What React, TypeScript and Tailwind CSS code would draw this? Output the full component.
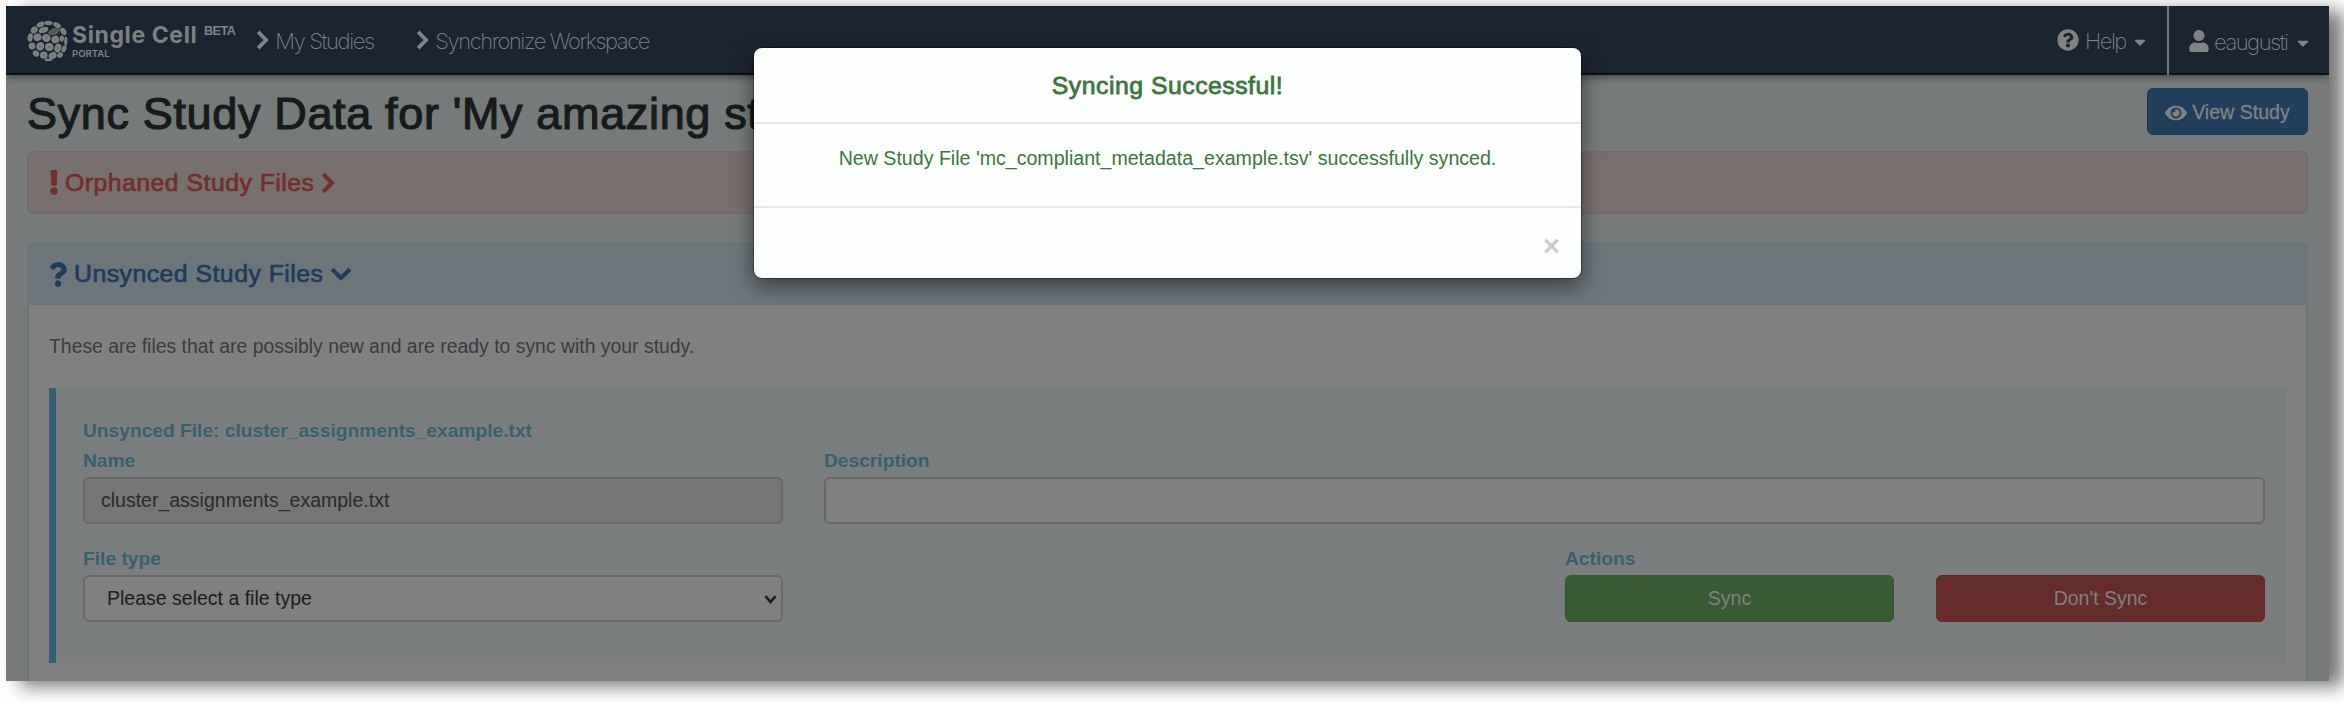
import React from "react";
import { FaQuestionCircle, FaUser, FaEye, FaExclamation, FaQuestion, FaCaretDown } from "react-icons/fa";

const cells: [number, number, number, number, number][] = [
  [13.5, 4.5, 4.2, 2.6, -25],
  [21.5, 3, 4, 2.3, 5],
  [30, 5.2, 4.2, 2.4, 30],
  [7.2, 10, 3.7, 3.2, -50],
  [16.5, 10, 5, 3, -20],
  [36.4, 11.5, 2.7, 4, -30],
  [3.2, 17.5, 2.5, 4.2, 10],
  [10.5, 17.2, 4, 3.7, -30],
  [19.3, 18, 4.3, 4, 20],
  [28.3, 19.5, 4, 3.8, -20],
  [34.8, 18.6, 2.1, 3.2, 0],
  [38.8, 21, 1.6, 4.6, 0],
  [5, 26, 3.3, 3.4, -20],
  [13.2, 26.3, 3.9, 4.4, 20],
  [22.3, 27, 4.2, 4, -10],
  [30.8, 28, 3.3, 4.4, 20],
  [37, 28.8, 2.3, 3.6, 20],
  [9, 33.6, 3.4, 2.9, 40],
  [16.8, 35.2, 3.7, 3.6, 0],
  [25.6, 35.6, 4, 3.4, -30],
  [33, 35, 3, 2.6, -40],
  [21.5, 39.7, 3.8, 1.3, 0],
];

function Logo() {
  return (
    <svg viewBox="0 0 41 41" className="h-[41px] w-[41px] shrink-0">
      <ellipse cx="27" cy="11.6" rx="6.2" ry="3.4" transform="rotate(-20 27 11.6)" fill="#54595c" />
      {cells.map(([x, y, rx, ry, r], i) => (
        <g key={i} transform={`translate(${x} ${y}) rotate(${r})`}>
          <ellipse rx={rx} ry={ry} fill="#7e8283" />
          <ellipse rx={rx * 0.35} ry={ry * 0.35} fill="#6e7375" />
        </g>
      ))}
    </svg>
  );
}

function ChevronRight({ className }: { className: string }) {
  return (
    <svg viewBox="0 0 13 21" className={`shrink-0 ${className}`}>
      <path d="M2 2 10.2 10.5 2 19" fill="none" stroke="currentColor" strokeWidth="4" />
    </svg>
  );
}

function ChevronDown({ className }: { className: string }) {
  return (
    <svg viewBox="0 0 21 13" className={`shrink-0 ${className}`}>
      <path d="M2 2 10.5 10.2 19 2" fill="none" stroke="currentColor" strokeWidth="3.8" />
    </svg>
  );
}

function NavText({ children, className }: { children: React.ReactNode; className: string }) {
  return (
    <span className={`whitespace-nowrap font-['Inter',sans-serif] text-[22px] font-extralight leading-[30px] text-[#7d8386] ${className}`}>
      {children}
    </span>
  );
}

function Navbar() {
  return (
    <nav className="relative z-10 flex h-[69px] shrink-0 items-stretch border-b-2 border-[#0d1117] bg-[#1b2431] text-[#7f8384] shadow-[0_2px_8px_rgba(0,0,0,0.45)]">
      <div className="flex items-start pl-[21px] pt-[14px]">
        <Logo />
        <div className="ml-1 flex w-[126px] flex-col pt-[4px]">
          <span className="h-[24px] whitespace-nowrap font-['Inter',sans-serif] text-[23px] font-bold leading-[23px] tracking-[0.6px] text-[#7c8081]">
            Single Cell
          </span>
          <span className="font-['Inter',sans-serif] text-[9.6px] font-semibold leading-[11px] tracking-[0px]">PORTAL</span>
        </div>
        <span className="ml-[6px] mt-[4px] text-[12.6px] font-bold leading-[14px] tracking-[-0.5px]">BETA</span>
      </div>
      <div className="ml-[21px] flex items-center">
        <ChevronRight className="mt-px h-[20px] w-[13px]" />
        <NavText className="ml-[6px] w-[98px] pt-[2px] tracking-[-1.4px]">My Studies</NavText>
        <ChevronRight className="ml-[43px] mt-px h-[20px] w-[13px]" />
        <NavText className="ml-[6px] pt-[2px] tracking-[-1.45px]">Synchronize Workspace</NavText>
      </div>
      <div className="ml-auto flex items-center pr-[20px]">
        <FaQuestionCircle className="h-[22px] w-[22px]" />
        <NavText className="ml-[6px] w-[41px] pt-[2px] tracking-[-1.5px]">Help</NavText>
        <FaCaretDown className="ml-[7px] mt-[4px] h-[18px] w-[14px]" />
      </div>
      <div className="-mb-[2px] flex items-center border-l-2 border-[#75797b] pl-[20px] pr-[19px]">
        <FaUser className="h-[22px] w-[20px]" />
        <NavText className="ml-[5px] w-[75px] pt-[2px] tracking-[-1.5px]">eaugusti</NavText>
        <FaCaretDown className="ml-[7px] mt-[4px] h-[18px] w-[14px]" />
      </div>
    </nav>
  );
}

function Label({ children }: { children: React.ReactNode }) {
  return (
    <div className="h-[31px] whitespace-nowrap pt-px text-[19.2px] font-bold leading-[28px] text-[#375f70]">{children}</div>
  );
}

function SyncForm() {
  return (
    <section className="mt-[20px] flex h-[275px] flex-col border-l-[7px] border-[#375f70] bg-[#797d7e] pl-[27px] pr-[21px] pt-[28px]">
      <Label>Unsynced File: cluster_assignments_example.txt</Label>
      <div className="-mt-px flex gap-[41px]">
        <div className="w-[700px]">
          <Label>Name</Label>
          <div className="flex h-[47px] items-center rounded-[6px] border-2 border-[#686868] bg-[#767677] pl-[16px] pt-px text-[19.5px] text-[#2a2a2b]">
            cluster_assignments_example.txt
          </div>
        </div>
        <div className="flex-1">
          <Label>Description</Label>
          <div className="h-[47px] rounded-[6px] border-2 border-[#686868] bg-[#808081]" />
        </div>
      </div>
      <div className="mt-[20px] flex">
        <div className="w-[700px]">
          <Label>File type</Label>
          <div className="flex h-[47px] items-center justify-between rounded-[6px] border-2 border-[#686868] bg-[#808081] pl-[22px] pr-[4px] pt-px text-[19.5px] text-[#1c1c1c]">
            Please select a file type
            <svg viewBox="0 0 12 9" className="h-[9px] w-[13px]">
              <path d="M1 1.2 6 7 11 1.2" fill="none" stroke="#1c1c1c" strokeWidth="2.6" />
            </svg>
          </div>
        </div>
        <div className="ml-auto w-[700px]">
          <Label>Actions</Label>
          <div className="flex gap-[42px] text-[19.5px] text-[#808080]">
            <button className="h-[47px] flex-1 rounded-[6px] border border-[#35562f] bg-[#395b33] pt-px">Sync</button>
            <button className="h-[47px] flex-1 rounded-[6px] border border-[#632725] bg-[#642d2b] pt-px">Don't Sync</button>
          </div>
        </div>
      </div>
    </section>
  );
}

function Modal() {
  return (
    <div className="absolute left-[748px] top-[42px] z-20 flex h-[230px] w-[827px] flex-col rounded-[8px] bg-[#fdfefe] text-[#3c763d] shadow-[0_0_0_1px_rgba(0,0,0,0.35),0_7px_21px_rgba(0,0,0,0.5)]">
      <h4 className="h-[76px] border-b-2 border-[#e5e8e8] pt-[23px] text-center text-[24.8px] font-normal leading-[29px] tracking-[0.5px] [-webkit-text-stroke:0.8px_#3c763d]">
        Syncing Successful!
      </h4>
      <p className="h-[84px] border-b-2 border-[#e5e8e8] pt-[20px] text-center text-[19.6px] leading-[28px]">
        New Study File 'mc_compliant_metadata_example.tsv' successfully synced.
      </p>
      <div className="flex justify-end pr-[21px] pt-[22px]">
        <span className="text-[29px] font-bold leading-[32px] text-[#cbcccc]">×</span>
      </div>
    </div>
  );
}

export default function App() {
  return (
    <div className="h-[702px] w-[2344px] overflow-hidden bg-white p-[6px] pr-[15px] font-['Liberation_Sans',Arial,sans-serif]">
      <div className="relative h-[675px] w-[2323px] bg-[#767a7a] shadow-[14px_5px_18px_rgba(0,0,0,0.55)]">
        <div className="flex h-full flex-col overflow-hidden">
          <Navbar />
          <main className="flex flex-col px-[21px] pt-[13px]">
            <div className="flex h-[63px] items-start justify-between">
              <h1 className="whitespace-nowrap pt-px text-[45px] font-normal leading-[50px] tracking-[0.65px] text-[#171b1c] [-webkit-text-stroke:1.2px_#171b1c]">
                Sync Study Data for 'My amazing study'
              </h1>
              <button className="flex h-[47px] w-[161px] items-center justify-center gap-[5px] rounded-[6px] border border-[#1c3955] bg-[#213e5c] pt-[2px] text-[19.6px] text-[#7f8384] [-webkit-text-stroke:0.3px_#7f8384]">
                <FaEye className="h-[22px] w-[22px]" />
                View Study
              </button>
            </div>
            <div className="flex h-[63px] items-center rounded-[6px] border-2 border-[#75696b] bg-[#78706e] pl-[19px] text-[24.8px] tracking-[0.48px] text-[#732f2c]">
              <FaExclamation className="h-[25px] w-[12px]" />
              <span className="ml-[5px] [-webkit-text-stroke:0.7px_#732f2c]">Orphaned Study Files</span>
              <ChevronRight className="ml-[7px] h-[22px] w-[14px]" />
            </div>
            <div className="mt-[28px] flex h-[445px] flex-col rounded-t-[6px] border-2 border-[#69777a] bg-[#808081]">
              <div className="flex h-[61px] shrink-0 items-center bg-[#6c757a] pl-[20px] text-[24.8px] tracking-[0.48px] text-[#203c5c]">
                <FaQuestion className="h-[25px] w-[18px]" preserveAspectRatio="none" />
                <span className="-mt-px ml-[7px] [-webkit-text-stroke:0.7px_#203c5c]">Unsynced Study Files</span>
                <ChevronDown className="-mt-px ml-[7px] h-[14px] w-[22px]" />
              </div>
              <div className="px-[20px] pt-[27px]">
                <p className="h-[36px] text-[19.4px] leading-[28px] text-[#3b3c3d]">
                  These are files that are possibly new and are ready to sync with your study.
                </p>
                <SyncForm />
              </div>
            </div>
          </main>
        </div>
        <Modal />
      </div>
    </div>
  );
}
